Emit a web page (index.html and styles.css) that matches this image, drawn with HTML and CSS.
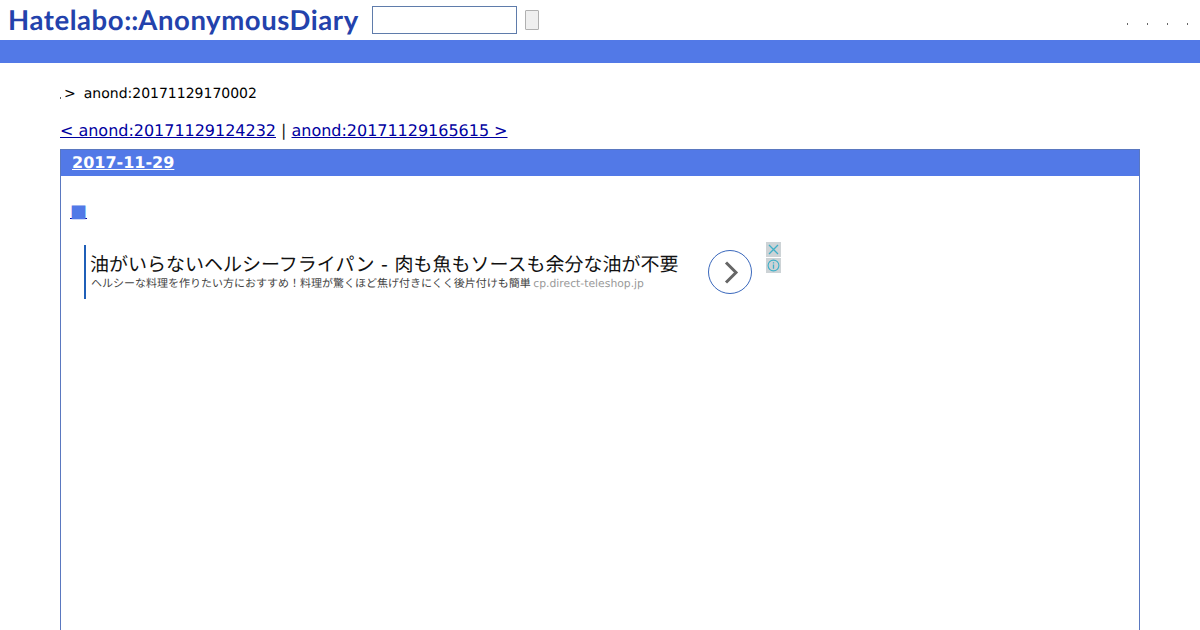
FILE: index.html
```html
<!DOCTYPE html>
<html lang="ja">
<head>
<meta charset="utf-8">
<title>anond:20171129170002</title>
<link rel="stylesheet" href="styles.css">
</head>
<body>
<header class="top">
  <a class="logo">Hatelabo<span class="logo-sep">::</span>AnonymousDiary</a>
  <form class="search"><input class="search-input" type="text"><button class="search-btn" type="button"></button></form>
  <div class="tools"><i class="dot"></i><i class="dot"></i><i class="dot"></i><i class="dot"></i></div>
</header>
<div class="bar"></div>
<main class="main">
  <div class="crumb"><i class="dot crumb-dot"></i><span class="gt">&gt;</span><span class="crumb-id">anond:20171129170002</span></div>
  <div class="pager"><a href="#">&lt; anond:20171129124232</a> | <a href="#">anond:20171129165615 &gt;</a></div>
  <section class="day">
    <h2 class="day-title"><a href="#">2017-11-29</a></h2>
    <div class="day-body">
      <a class="sq-link" href="#"><span class="sq">■</span></a>
      <div class="ad">
        <div class="ad-text">
          <div class="ad-title">油がいらないヘルシーフライパン - 肉も魚もソースも余分な油が不要</div>
          <div class="ad-desc">ヘルシーな料理を作りたい方におすすめ！料理が驚くほど焦げ付きにくく後片付けも簡単 <span class="ad-domain">cp.direct-teleshop.jp</span></div>
        </div>
        <div class="ad-arrow">
          <svg width="44" height="44" viewBox="0 0 44 44"><circle cx="22" cy="22" r="21.5" fill="#fff" stroke="#3a68bc" stroke-width="1"/><path d="M18 12.5 L28 22.5 L18 32.5" fill="none" stroke="#666" stroke-width="3"/></svg>
        </div>
        <div class="ad-badges">
          <svg class="badge" width="15" height="15" viewBox="0 0 15 15"><rect width="15" height="15" fill="#cdd3d6"/><path d="M3 3 L12 12 M12 3 L3 12" stroke="#3fb0c8" stroke-width="1.3"/></svg>
          <svg class="badge" width="15" height="15" viewBox="0 0 15 15"><rect width="15" height="15" fill="#cdd3d6"/><circle cx="7.5" cy="7.5" r="5.4" fill="none" stroke="#3fb0c8" stroke-width="1.1"/><path d="M7.5 4.2 V5.6 M7.5 6.6 V10.8" stroke="#3fb0c8" stroke-width="1.3"/></svg>
        </div>
      </div>
    </div>
  </section>
</main>
</body>
</html>
```
FILE: styles.css
```css
html, body { margin: 0; padding: 0; height: 630px; overflow: hidden; background: #fff; }
body { font-family: "DejaVu Sans", sans-serif; color: #000; text-rendering: geometricPrecision; }
a { color: #0000a0; }

.top { height: 40px; display: flex; align-items: flex-start; box-sizing: border-box; }
.logo { margin: 3px 0 0 8px; width: 364px; font: 700 27.5px/34px "Lato", sans-serif; letter-spacing: 0.57px; color: #2342ac; white-space: nowrap; }
.logo-sep { letter-spacing: 0; }
.search { display: flex; align-items: center; margin-top: 6px; gap: 8px; }
.search-input { width: 145px; height: 28px; box-sizing: border-box; border: 1px solid #5f7cab; padding: 0; margin: 0; background: #fff; }
.search-btn { width: 14px; height: 20px; box-sizing: border-box; border: 1px solid #b0b0b0; background: #efefef; padding: 0; margin: 0; border-radius: 1px; }
.tools { margin: 23px 0 0 auto; padding-right: 12px; display: flex; gap: 19px; }
.dot { display: block; width: 1px; height: 2px; background: #666; }

.bar { height: 23px; background: #5279e7; }

.main { padding: 23px 60px 0; }
.crumb { display: flex; align-items: center; height: 16px; font-size: 14px; line-height: 16px; }
.crumb-dot { margin-top: 8px; margin-right: 3px; }
.gt { margin-right: 8px; font-size: 14px; }
.pager { margin-top: 19px; font-size: 16px; line-height: 19px; color: #222; letter-spacing: -0.02px; }

.day { margin-top: 9px; border: 1px solid #5a78c0; border-bottom: 0; height: 481px; box-sizing: border-box; }
.day-title { margin: 0; padding: 0 11px; height: 26px; background: #5279e7; font: 700 16px/26px "DejaVu Sans", sans-serif; }
.day-title a { color: #fff; }
.day-body { padding: 26px 9px 0; }
.sq-link { display: block; width: 15px; height: 20px; font-size: 18px; line-height: 20px; }
.sq { color: #5279e7; }
.ad { display: flex; align-items: flex-start; margin: 23px 0 0 14px; }
.ad-text { width: 620px; height: 54px; border-left: 2px solid #1f5fb8; box-sizing: border-box; padding-left: 4px; }
.ad-title { margin-top: 7px; font: 400 19px/26px "DejaVu Sans", "Noto Sans CJK JP", sans-serif; word-spacing: 0.6px; color: #111; white-space: nowrap; }
.ad-desc { margin-top: -2px; padding-left: 1px; font: 400 11px/15px "Noto Sans CJK JP", sans-serif; color: #444; white-space: nowrap; }
.ad-domain { font-family: "DejaVu Sans", sans-serif; font-size: 10.8px; color: #999; }
.ad-arrow { margin: 5px 0 0 4px; height: 44px; }
.ad-badges { margin: -3px 0 0 14px; display: flex; flex-direction: column; gap: 1px; }
.badge { display: block; }
```
